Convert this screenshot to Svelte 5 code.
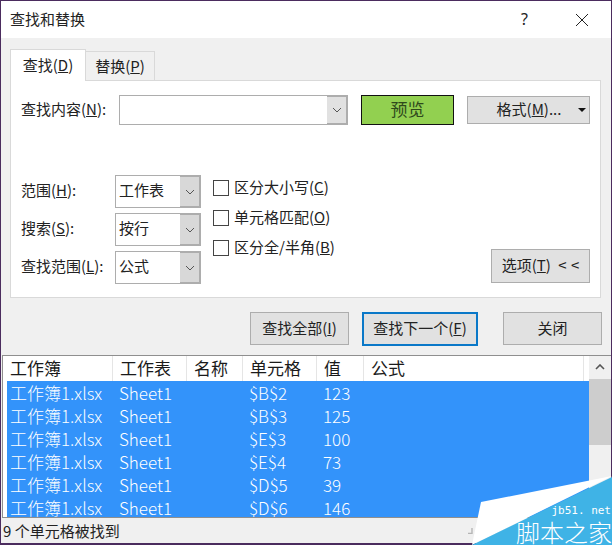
<script>
  const columns = [
    { name: '工作簿', w: 110 },
    { name: '工作表', w: 74 },
    { name: '名称', w: 56 },
    { name: '单元格', w: 74 },
    { name: '值', w: 47 },
    { name: '公式', w: 220 }
  ];
  const cellWidths = [106, 74, 56, 74, 47];
  const rows = [
    ['工作簿1.xlsx', 'Sheet1', '', '$B$2', '123'],
    ['工作簿1.xlsx', 'Sheet1', '', '$B$3', '125'],
    ['工作簿1.xlsx', 'Sheet1', '', '$E$3', '100'],
    ['工作簿1.xlsx', 'Sheet1', '', '$E$4', '73'],
    ['工作簿1.xlsx', 'Sheet1', '', '$D$5', '39'],
    ['工作簿1.xlsx', 'Sheet1', '', '$D$6', '146']
  ];
  const selects = [
    { label: '范围', key: 'H', value: '工作表' },
    { label: '搜索', key: 'S', value: '按行' },
    { label: '查找范围', key: 'L', value: '公式' }
  ];
  const checks = [
    { label: '区分大小写', key: 'C' },
    { label: '单元格匹配', key: 'O' },
    { label: '区分全/半角', key: 'B' }
  ];
</script>

{#snippet chevron()}
  <svg class="chev" width="10" height="6" viewBox="0 0 10 6"><path d="M1 1l4 4 4-4" fill="none" stroke="#555" stroke-width="1"/></svg>
{/snippet}

<div class="window">
  <header class="titlebar">
    <span class="title">查找和替换</span>
    <span class="help">?</span>
    <svg class="close" width="14" height="14" viewBox="0 0 14 14"><path d="M1 1l12 12M13 1L1 13" stroke="#222" stroke-width="1" fill="none"/></svg>
  </header>

  <div class="dialog">
    <div class="tabs">
      <div class="tab active">查找(<u>D</u>)</div>
      <div class="tab">替换(<u>P</u>)</div>
    </div>

    <section class="panel">
      <div class="find-row">
        <span class="find-label">查找内容(<u>N</u>):</span>
        <div class="combo find-combo"><span class="value"></span><span class="arrow">{@render chevron()}</span></div>
        <button class="preview">预览</button>
        <button class="btn format"><span>格式(<u>M</u>)...</span><i class="caret"></i></button>
      </div>

      <div class="options">
        <div class="select-grid">
          {#each selects as s}
            <span class="opt-label">{s.label}(<u>{s.key}</u>):</span>
            <div class="combo small"><span class="value">{s.value}</span><span class="arrow">{@render chevron()}</span></div>
          {/each}
        </div>
        <div class="checks">
          {#each checks as c}
            <div class="check"><span class="box"></span><span class="check-text">{c.label}(<u>{c.key}</u>)</span></div>
          {/each}
        </div>
        <button class="btn options-btn">选项(<u>T</u>) <span class="lt">&lt; &lt;</span></button>
      </div>
    </section>

    <div class="actions">
      <button class="btn act all">查找全部(<u>I</u>)</button>
      <button class="btn act next">查找下一个(<u>F</u>)</button>
      <button class="btn act shut">关闭</button>
    </div>

    <section class="results">
      <div class="list">
        <div class="thead">
          {#each columns as c}
            <span class="th" style="width:{c.w}px">{c.name}</span>
          {/each}
        </div>
        <div class="tbody">
          {#each rows as r}
            <div class="tr">
              {#each r as cell, i}
                <span class="td" style="width:{cellWidths[i]}px">{cell}</span>
              {/each}
            </div>
          {/each}
        </div>
      </div>
      <div class="scrollbar">
        <svg class="up" width="10" height="6" viewBox="0 0 10 6"><path d="M1 5l4-4 4 4" fill="none" stroke="#555" stroke-width="1.6"/></svg>
        <div class="thumb"></div>
      </div>
    </section>

    <footer class="status">
      <span>9 个单元格被找到</span>
      <svg class="grip" width="6" height="7" viewBox="0 0 6 7"><path d="M1 6.5L5 6.5L5 1" fill="none" stroke="#b5b5b5" stroke-width="1.4"/></svg>
    </footer>
  </div>

  <div class="watermark">
    <svg width="140" height="69" viewBox="0 0 140 69">
      <polygon points="9,26 140,0 0,69" fill="#fff"/>
      <polygon points="0,69 140,1 140,69" fill="#3fb3e6"/>
    </svg>
    <span class="wm-url">jb51. net</span>
    <span class="wm-name">脚本之家</span>
  </div>
</div>

<style>
  :global(body) {
    margin: 0;
    background: #fff;
  }
  .window {
    position: relative;
    width: 612px;
    height: 545px;
    box-sizing: border-box;
    border: 1px solid #4b2c5e;
    border-width: 1px 1px 2px 1px;
    display: flex;
    flex-direction: column;
    font-family: "Noto Sans CJK SC", "Noto Sans", sans-serif;
    font-size: 15px;
    color: #222;
    background: #fff;
  }
  .titlebar {
    height: 37px;
    flex: none;
    display: flex;
    align-items: center;
    padding-left: 9px;
    background: #fff;
  }
  .title {
    flex: 1;
    padding-bottom: 2px;
  }
  .help {
    font-size: 16px;
    margin-right: 47px;
    font-family: "Noto Sans", sans-serif;
    padding-bottom: 2px;
  }
  .close {
    margin-right: 22px;
  }
  .dialog {
    flex: 1;
    min-height: 0;
    background: #f0f0f0;
    display: flex;
    flex-direction: column;
  }
  .tabs {
    display: flex;
    align-items: flex-end;
    height: 43px;
    flex: none;
    padding-left: 9px;
    position: relative;
    z-index: 1;
    margin-bottom: -1px;
  }
  .tab {
    height: 30px;
    width: 69px;
    box-sizing: border-box;
    border: 1px solid #d9d9d9;
    border-bottom: 0;
    border-left: 0;
    display: flex;
    align-items: center;
    justify-content: center;
    padding-bottom: 3px;
  }
  .tab.active {
    height: 32px;
    width: 76px;
    background: #fff;
    border-left: 1px solid #d9d9d9;
  }
  .panel {
    height: 218px;
    flex: none;
    box-sizing: border-box;
    margin: 0 10px 0 9px;
    background: #fff;
    border: 1px solid #d9d9d9;
    padding: 14px 9px 0 10px;
    display: flex;
    flex-direction: column;
  }
  .find-row {
    display: flex;
    align-items: center;
    height: 30px;
  }
  .find-label {
    width: 98px;
    flex: none;
    padding-bottom: 3px;
    white-space: nowrap;
  }
  .combo {
    box-sizing: border-box;
    border: 1px solid #adadad;
    background: #fff;
    display: flex;
    align-items: stretch;
    flex: none;
  }
  .find-combo {
    width: 229px;
    height: 30px;
  }
  .value {
    flex: 1;
    padding-left: 3px;
    padding-bottom: 4px;
    display: flex;
    align-items: center;
  }
  .arrow {
    background: #e1e1e1;
    box-sizing: border-box;
    display: flex;
    align-items: center;
    justify-content: center;
    border: 1px solid #adadad;
    border-width: 2px 2px 2px 0;
    width: 21px;
    margin: -1px -1px -1px 0;
  }
  .small .arrow {
    background: #d8d8d8;
  }
  .chev {
    display: block;
  }
  .preview {
    margin-left: 13px;
    width: 93px;
    height: 30px;
    flex: none;
    background: #92d050;
    border: 1px solid #111;
    padding: 0 0 3px;
    font: inherit;
    font-size: 17px;
    color: #2f4a1c;
  }
  .btn {
    box-sizing: border-box;
    background: #e1e1e1;
    border: 1px solid #adadad;
    padding: 0 0 3px;
    font: inherit;
    color: #222;
    flex: none;
    display: flex;
    align-items: center;
    justify-content: center;
  }
  .format {
    margin-left: 13px;
    width: 123px;
    height: 28px;
    position: relative;
    padding-right: 0;
    padding-left: 1px;
  }
  .caret {
    position: absolute;
    right: 3px;
    top: 11px;
    width: 0;
    height: 0;
    border: 4px solid transparent;
    border-top: 4px solid #111;
    border-bottom: 0;
  }
  .options {
    margin-top: 50px;
    display: flex;
    align-items: flex-start;
    flex: 1;
  }
  .select-grid {
    display: grid;
    grid-template-columns: 94px 86px;
    grid-auto-rows: 33px;
    row-gap: 5px;
    align-items: center;
    flex: none;
  }
  .opt-label {
    padding-bottom: 4px;
    white-space: nowrap;
  }
  .small {
    width: 86px;
    height: 33px;
  }
  .small .value {
    padding-left: 3px;
  }
  .checks {
    margin-left: 12px;
    padding-top: 4px;
    display: flex;
    flex-direction: column;
    gap: 13px;
    flex: 1;
  }
  .check {
    height: 17px;
    display: flex;
    align-items: center;
  }
  .check-text {
    white-space: nowrap;
    padding-bottom: 2px;
  }
  .box {
    width: 16px;
    height: 16px;
    box-sizing: border-box;
    border: 1px solid #444;
    background: #fff;
    margin-right: 5px;
  }
  .options-btn {
    width: 99px;
    height: 34px;
    margin-top: 74px;
    margin-right: 1px;
    white-space: pre;
  }
  .lt {
    word-spacing: 1px;
    margin-left: 4px;
  }
  .actions {
    display: flex;
    height: 34px;
    flex: none;
    margin-top: 14px;
    padding-left: 249px;
    align-items: flex-start;
  }
  .act {
    height: 33px;
    white-space: nowrap;
  }
  .all {
    width: 99px;
  }
  .next {
    width: 116px;
    height: 34px;
    margin-left: 13px;
    border: 2px solid #0a78c8;
  }
  .shut {
    width: 99px;
    margin-left: 25px;
  }
  .results {
    margin-top: 9px;
    height: 163px;
    flex: none;
    box-sizing: border-box;
    border-top: 1px solid #8f8f8f;
    border-bottom: 1px solid #8f8f8f;
    border-left: 1px solid #8f8f8f;
    margin-left: 1px;
    display: flex;
    background: #fff;
  }
  .list {
    flex: 1;
    min-width: 0;
    overflow: hidden;
    display: flex;
    flex-direction: column;
  }
  .thead {
    height: 25px;
    flex: none;
    display: flex;
    box-sizing: border-box;
    background: #fff;
  }
  .th {
    box-sizing: border-box;
    flex: none;
    font-size: 17px;
    line-height: 24px;
    padding-left: 7px;
    border-right: 1px solid #e5e5e5;
    color: #1a1a1a;
  }
  .tbody {
    margin-left: 4px;
    background: #3393fa;
    flex: 1;
    min-height: 0;
    overflow: hidden;
  }
  .tr {
    height: 23px;
    display: flex;
    color: #fff;
  }
  .td {
    box-sizing: border-box;
    flex: none;
    font-size: 17px;
    font-weight: 300;
    line-height: 24px;
    padding-left: 6px;
    white-space: nowrap;
  }
  .td:first-child {
    padding-left: 3px;
  }
  .scrollbar {
    width: 22px;
    flex: none;
    background: #f0f0f0;
    display: flex;
    flex-direction: column;
    align-items: center;
  }
  .up {
    margin: 8px 0 9px;
    flex: none;
  }
  .thumb {
    width: 100%;
    height: 66px;
    background: #cdcdcd;
  }
  .status {
    flex: 1;
    background: #f0f0f0;
    padding: 0 138px 0 2px;
    line-height: 24px;
    white-space: nowrap;
    display: flex;
    justify-content: space-between;
    align-items: center;
  }
  .grip {
    flex: none;
  }
  .watermark {
    position: absolute;
    right: -1px;
    bottom: -2px;
    width: 140px;
    height: 69px;
  }
  .watermark svg {
    display: block;
  }
  .wm-url {
    position: absolute;
    right: 1px;
    top: 28px;
    font-family: "DejaVu Sans Mono", monospace;
    font-size: 11px;
    line-height: 14px;
    color: #fff;
    white-space: nowrap;
  }
  .wm-name {
    position: absolute;
    right: 0;
    top: 43px;
    font-size: 24px;
    line-height: 26px;
    font-weight: 300;
    color: #fff;
    white-space: nowrap;
  }
  u {
    text-underline-offset: 1px;
  }
</style>
